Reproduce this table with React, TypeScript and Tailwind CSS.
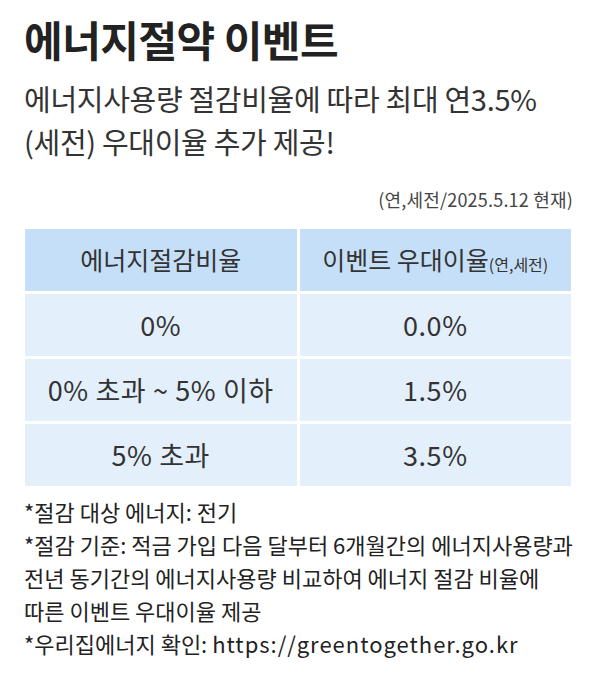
import React from 'react'

const rows = [
	['0%', '0.0%'],
	['0% 초과 ~ 5% 이하', '1.5%'],
	['5% 초과', '3.5%'],
]

const App = () => {
	return (
		<div className="w-[600px] h-[675px] bg-white overflow-hidden text-[#222] font-['Noto_Sans_CJK_KR','Noto_Sans',sans-serif]">
			<div className="pl-[24px] pr-[29px] pt-[14px]">
				<h1 className="text-[42px] leading-[50px] font-bold tracking-[-0.5px] text-[#222]">에너지절약 이벤트</h1>
				<p className="mt-[13px] text-[29px] leading-[43px] text-[#333] tracking-[-0.3px]">
					에너지사용량 절감비율에 따라 최대 연3.5%
					<br />
					(세전) 우대이율 추가 제공!
				</p>
				<p className="mt-[24px] -mr-[2px] text-right text-[18px] leading-[24px] text-[#444] tracking-[0.2px]">(연,세전/2025.5.12 현재)</p>

				<div className="mt-[18px] ml-[1px] grid grid-cols-2 gap-[3px] text-[#333] text-center">
					<div className="bg-[#c6dff8] h-[62px] flex items-center justify-center text-[25px]">에너지절감비율</div>
					<div className="bg-[#c6dff8] h-[62px] flex items-center justify-center text-[25px]">
						이벤트 우대이율<span className="text-[16px] mt-[8px]">(연,세전)</span>
					</div>
					{rows.map(([a, b]) => (
						<React.Fragment key={a}>
							<div className="bg-[#e4effc] h-[62px] flex items-center justify-center text-[27px] tracking-[0.6px]">{a}</div>
							<div className="bg-[#e4effc] h-[62px] flex items-center justify-center text-[27px] tracking-[0.6px]">{b}</div>
						</React.Fragment>
					))}
				</div>

				<div className="mt-[9px] text-[22px] leading-[33px] text-[#222] whitespace-nowrap">
					<p>*절감 대상 에너지: 전기</p>
					<p>*절감 기준: 적금 가입 다음 달부터 6개월간의 에너지사용량과</p>
					<p>전년 동기간의 에너지사용량 비교하여 에너지 절감 비율에</p>
					<p>따른 이벤트 우대이율 제공</p>
					<p>
						*우리집에너지 확인: <span className="tracking-[1px]">https://greentogether.go.kr</span>
					</p>
				</div>
			</div>
		</div>
	)
}

export default App
